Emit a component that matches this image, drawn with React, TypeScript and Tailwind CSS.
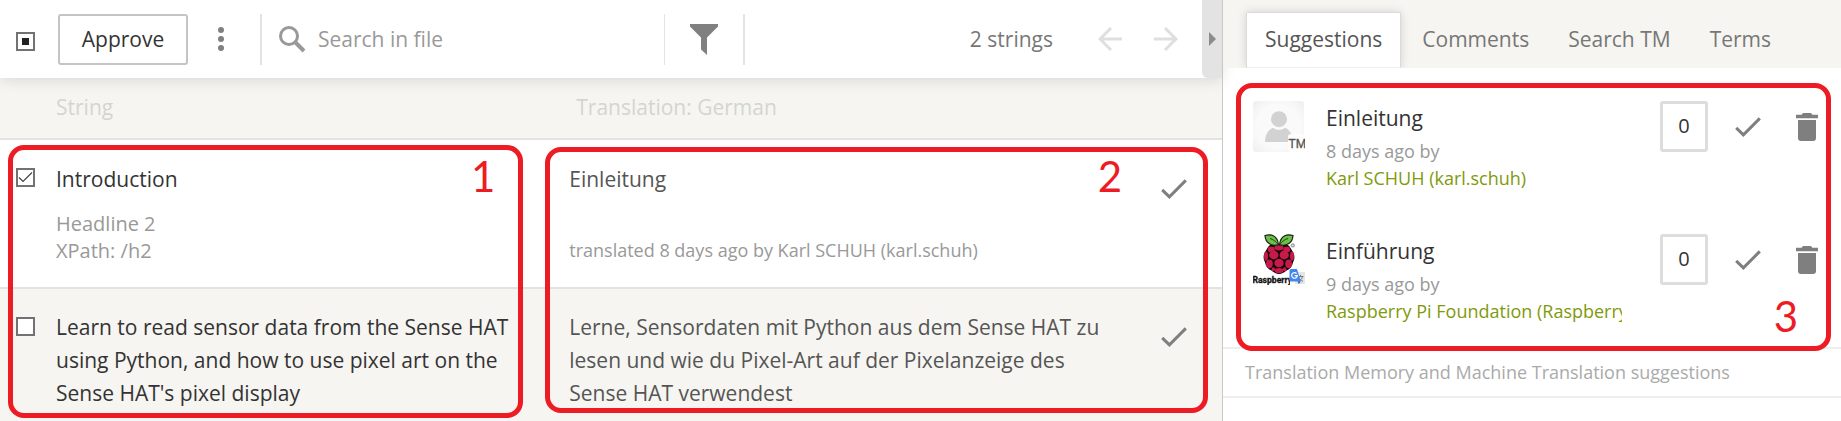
import React, { useEffect, useRef } from "react";

const Check = ({ className = "" }: { className?: string }) => (
  <svg className={className} width="26" height="20" viewBox="0 0 26 20" fill="none" stroke="#7f7f7f" strokeWidth="3">
    <path d="M1.2 10.8 8.4 17.8 24.8 1.4" />
  </svg>
);

const Trash = () => (
  <svg width="22" height="28" viewBox="0 0 22 28" fill="#7f7f7f">
    <path d="M0 1.8h5.6L7 0h8l1.4 1.8H22v3.4H0z" />
    <path d="M2 7h18v18a3 3 0 0 1-3 3H5a3 3 0 0 1-3-3z" />
  </svg>
);

const Avatar = () => (
  <svg width="52" height="51" viewBox="0 0 52 51" className="shrink-0" role="img" aria-label="Translation memory">
    <defs>
      <radialGradient id="av" cx="50%" cy="50%" r="70%">
        <stop offset="0.6" stopColor="#fafafa" />
        <stop offset="1" stopColor="#efefef" />
      </radialGradient>
    </defs>
    <rect width="51" height="51" rx="3" fill="url(#av)" />
    <circle cx="26" cy="18.2" r="8" fill="#d2d2d2" />
    <path d="M12 41c0-7 3.4-12.500 8-14.200 3.500 2.700 8.400 2.700 12 0 4.600 1.700 8 7.200 8 14.200z" fill="#d2d2d2" />
    <rect x="35" y="33" width="17" height="18" rx="3" fill="#fdfdfd" />
    <text x="35.500" y="47" fontSize="12" fill="#555" stroke="#555" strokeWidth="0.3" fontFamily="Roboto, sans-serif">TM</text>
  </svg>
);

const BERRIES: [number, number, number, number][] = [
  [26, 13.6, 4.6, 3], [18.2, 15.4, 3.6, 3], [33.8, 15.4, 3.6, 3],
  [20.8, 21, 4.7, 4.4], [31.2, 21, 4.7, 4.4],
  [13, 22.2, 2, 4.6], [39, 22.2, 2, 4.6],
  [26, 29, 4.7, 4.3], [16.4, 29.8, 3.4, 4.4], [35.6, 29.8, 3.4, 4.4],
  [26, 36.6, 4.3, 2.6], [20.4, 35.2, 1.8, 2], [31.6, 35.2, 1.8, 2],
];

const RaspberryLogo = () => (
  <svg width="52" height="51" viewBox="0 0 52 51" className="shrink-0" role="img" aria-label="Raspberry Pi Foundation">
    <path d="M26 10c5-1.500 9.500 0 11.600 4 .8 1.500 1.400 2.600 2.300 4 2 3 2 7 .2 10-.6 4-3 7-6.500 8.600C31 38.600 28.500 40 26 40s-5-1.400-7.600-3.400C15 35 12.500 32 11.900 28c-1.800-3-1.800-7 .2-10 .9-1.400 1.500-2.500 2.300-4C16.500 10 21 8.500 26 10z" fill="#100406" />
    {BERRIES.map(([cx, cy, rx, ry], i) => (
      <ellipse key={i} cx={cx} cy={cy} rx={rx} ry={ry} fill="#c51a4a" />
    ))}
    <path d="M25.500 10.800C18 12.500 12.500 9 12 1.500c5-1.500 12.500-1 13.500 9.300zM26.500 10.800C34 12.500 39.500 9 40 1.500c-5-1.500-12.500-1-13.500 9.300z" fill="#6cc04a" stroke="#16240f" strokeWidth="1.2" />
    <path d="M17 4.500c3 .8 6 3 8.500 6.300M35 4.500c-3 .8-6 3-8.500 6.300" fill="none" stroke="#16240f" strokeWidth="0.8" />
    <circle cx="39.8" cy="11.4" r="1.6" fill="#ddd" stroke="#666" strokeWidth="0.7" />
    <text x="-0.5" y="49" fontSize="8.6" fontWeight="700" fill="#111" stroke="#111" strokeWidth="0.3" fontFamily="Roboto, sans-serif">Raspberry</text>
    <path d="M37 35h15v16H37z" fill="#fff" />
    <rect x="42" y="38" width="10" height="12" rx="1" fill="#e4e4e4" />
    <path d="M44.500 42.500h6M47.500 41v1.500M49.500 42.500c-.5 2.500-2 4-4 5M46 43.500c.8 1.800 2 3 4 3.800" stroke="#6f7f86" strokeWidth="1" fill="none" />
    <path d="M38 35h6l3.800 12.500H38A1.500 1.500 0 0 1 36.500 46v-9.500A1.500 1.500 0 0 1 38 35z" fill="#4285f4" />
    <path d="M44.800 47.500h3l-2 2.500z" fill="#2f55a4" />
    <path d="M43.600 39.600a2.800 2.800 0 1 0 .7 2H41.500" stroke="#fff" strokeWidth="1.2" fill="none" />
  </svg>
);

function Tick({ label, state }: { label: string; state: "on" | "off" | "mixed" }) {
  const ref = useRef<HTMLInputElement>(null);
  useEffect(() => {
    if (ref.current) ref.current.indeterminate = state === "mixed";
  }, [state]);
  return (
    <span className="grid size-[19px] shrink-0">
      <input
        ref={ref}
        type="checkbox"
        aria-label={label}
        defaultChecked={state === "on"}
        className="col-start-1 row-start-1 size-[19px] appearance-none border-2 border-[#727272] bg-white"
      />
      <svg className="pointer-events-none col-start-1 row-start-1" width="19" height="19" viewBox="0 0 19 19" fill="none">
        {state === "mixed" && <rect x="6" y="6" width="7" height="7" fill="#222" />}
        {state === "on" && <path d="M3 9.500 7 13.500 16 4.500" stroke="#444" strokeWidth="1.2" />}
      </svg>
    </span>
  );
}

function Suggestion({ icon, text, age, author }: { icon: React.ReactNode; text: string; age: string; author: string }) {
  return (
    <li className="flex h-[133px] items-start">
      {icon}
      <div className="ml-[21px] w-[296px] min-w-0 overflow-hidden pt-px whitespace-nowrap">
        <p className="text-[21px] leading-[33px] text-[#333]">{text}</p>
        <p className="mt-[3px] text-[18px] leading-[27px] text-[#999]">{age}</p>
        <a href="#author" className="block text-[18px] leading-[27px] text-[#7f9a0c]">{author}</a>
      </div>
      <div className="ml-auto flex h-[51px] items-center">
        <button className="h-[51px] w-12 rounded-[3px] border-[3px] border-[#ddd] pb-[2px] text-[20px] text-[#333]" aria-label="Votes">0</button>
        <button className="ml-[27px]" aria-label="Use suggestion"><Check /></button>
        <button className="ml-[35px]" aria-label="Delete suggestion"><Trash /></button>
      </div>
    </li>
  );
}

const frame = "pointer-events-none absolute rounded-[16px] border-5 border-[#ed1c24]";
const numeral = "pointer-events-none absolute font-['Lato',sans-serif] text-[42px] leading-[42px] text-[#ed1c24]";

export default function App() {
  return (
    <div className="grid min-h-screen grid-cols-[minmax(0,1fr)_619px] overflow-hidden bg-white font-['Open_Sans',sans-serif] text-[21px]">
      <main className="relative flex flex-col bg-[#f6f5f1]">
        <div className="relative flex h-[78px] items-center bg-white pl-4 shadow-[0_2px_14px_rgba(0,0,0,0.12)]">
          <div className="mt-[5px] flex"><Tick label="Select all strings" state="mixed" /></div>
          <button className="ml-[23px] h-[51px] w-[130px] rounded-[3px] border-2 border-[#c4c4c4] pt-[2px] text-[21px] text-[#333]">Approve</button>
          <button className="ml-[30px]" aria-label="More actions">
            <svg width="6" height="24" viewBox="0 0 6 24" fill="#808080"><circle cx="3" cy="3" r="3" /><circle cx="3" cy="12" r="3" /><circle cx="3" cy="21" r="3" /></svg>
          </button>
          <div className="ml-9 flex h-[51px] flex-1 items-center border-r border-l-2 border-[#e3e3e3] pl-[17px]">
            <svg width="27" height="27" viewBox="0 0 27 27" fill="none" stroke="#999"><circle cx="10" cy="10" r="8.5" strokeWidth="3" /><path d="M16.500 16.500 25 25" strokeWidth="4" /></svg>
            <input aria-label="Search in file" placeholder="Search in file" className="ml-3 min-w-0 flex-1 pt-[2px] text-[21px] outline-none placeholder:text-[#999]" />
          </div>
          <div className="flex h-[51px] w-20 items-center border-r-2 border-[#e3e3e3] pl-[25px]">
            <button aria-label="Filter">
              <svg width="28" height="31" viewBox="0 0 28 31" fill="#808080"><path d="M0 0h28v2.500L17 13.500V31l-6-5.500v-12L0 2.500z" /></svg>
            </button>
          </div>
          <div className="flex h-full w-[477px] items-center justify-end">
            <span className="mr-[45px] pt-[2px] text-[#777]">2 strings</span>
            <button aria-label="Previous">
              <svg width="24" height="24" viewBox="0 0 24 24" fill="none" stroke="#dfdfdf" strokeWidth="3"><path d="M24 12H2.500M13 1 2 12l11 11" /></svg>
            </button>
            <button className="mr-6 ml-8" aria-label="Next">
              <svg width="24" height="24" viewBox="0 0 24 24" fill="none" stroke="#dfdfdf" strokeWidth="3"><path d="M0 12h21.500M11 1l11 11-11 11" /></svg>
            </button>
            <button className="flex h-full w-5 items-center justify-center rounded-bl-[6px] bg-[#e3e3e3]" aria-label="Collapse panel">
              <svg width="7" height="14" viewBox="0 0 7 14" fill="#8c8c8c"><path d="M0 0l7 7-7 7z" /></svg>
            </button>
          </div>
        </div>

        <table className="w-full table-fixed border-separate border-spacing-0">
          <colgroup>
            <col className="w-[56px]" />
            <col className="w-[42%]" />
            <col />
            <col className="w-[81px]" />
          </colgroup>
          <thead>
            <tr className="h-[62px] text-left text-[21px] text-[#d3d6cf] *:border-b-2 *:border-[#e3e3e3] *:font-normal">
              <td />
              <th>String</th>
              <th className="pl-[7px]">Translation: German</th>
              <td />
            </tr>
          </thead>
          <tbody>
            <tr className="h-[149px] bg-white align-top *:border-b-2 *:border-[#e3e3e3]">
              <td className="pt-7 pl-4"><Tick label="Select Introduction" state="on" /></td>
              <td className="pt-[23px] pr-9 leading-[33px] text-[#333]">
                Introduction
                <p className="mt-[14px] text-[20px] leading-[27px] text-[#999]">Headline 2<br />XPath: /h2</p>
              </td>
              <td className="pt-[23px] leading-[33px] text-[#555]">
                Einleitung
                <p className="mt-[41px] text-[18px] leading-[27px] text-[#999]">translated 8 days ago by Karl SCHUH (karl.schuh)</p>
              </td>
              <td className="pt-[39px] pl-5"><Check /></td>
            </tr>
            <tr className="align-top">
              <td className="pt-7 pl-4"><Tick label="Select Learn to read sensor data" state="off" /></td>
              <td className="pt-[22px] pr-9 leading-[33px] text-[#333]">Learn to read sensor data from the Sense HAT using Python, and how to use pixel art on the Sense HAT's pixel display</td>
              <td className="pt-[22px] pr-8 leading-[33px] text-[#555]">Lerne, Sensordaten mit Python aus dem Sense HAT zu lesen und wie du Pixel-Art auf der Pixelanzeige des Sense HAT verwendest</td>
              <td className="pt-[38px] pl-5"><Check /></td>
            </tr>
          </tbody>
        </table>

        <div className={`${frame} top-[145px] left-2 h-[273px] w-[515px]`} />
        <span className={`${numeral} top-[155px] left-[471px]`}>1</span>
        <div className={`${frame} top-[147px] right-[14px] left-[545px] h-[266px]`} />
        <span className={`${numeral} top-[155px] right-[100px]`}>2</span>
      </main>

      <aside className="relative border-l border-[#c9c9c4]">
        <nav className="flex h-[68px] items-end gap-[3px] overflow-hidden bg-[#f6f5f1] pl-[23px] text-[#777]">
          <button className="h-14 rounded-t-[2px] border border-[#dadada] border-b-[#eee] bg-white px-[18px] pb-px text-[#555] shadow-[0_0_10px_rgba(0,0,0,0.15)]">Suggestions</button>
          <button className="h-14 px-[18px] pb-px">Comments</button>
          <button className="h-14 px-[18px] pb-px">Search TM</button>
          <button className="h-14 px-[18px] pb-px">Terms</button>
        </nav>
        <ul className="h-[281px] border-b-2 border-[#eee] pt-[33px] pr-[23px] pl-[30px]">
          <Suggestion icon={<Avatar />} text="Einleitung" age="8 days ago by" author="Karl SCHUH (karl.schuh)" />
          <Suggestion icon={<RaspberryLogo />} text="Einführung" age="9 days ago by" author="Raspberry Pi Foundation (RaspberryPiFoundation)" />
        </ul>
        <p className="h-[49px] border-b-2 border-[#eee] pl-[22px] text-[18px] leading-[47px] text-[#aaa]">Translation Memory and Machine Translation suggestions</p>
        <div className={`${frame} top-[83px] right-[10px] left-[13px] h-[268px]`} />
        <span className={`${numeral} top-[295px] right-[43px]`}>3</span>
      </aside>
    </div>
  );
}
